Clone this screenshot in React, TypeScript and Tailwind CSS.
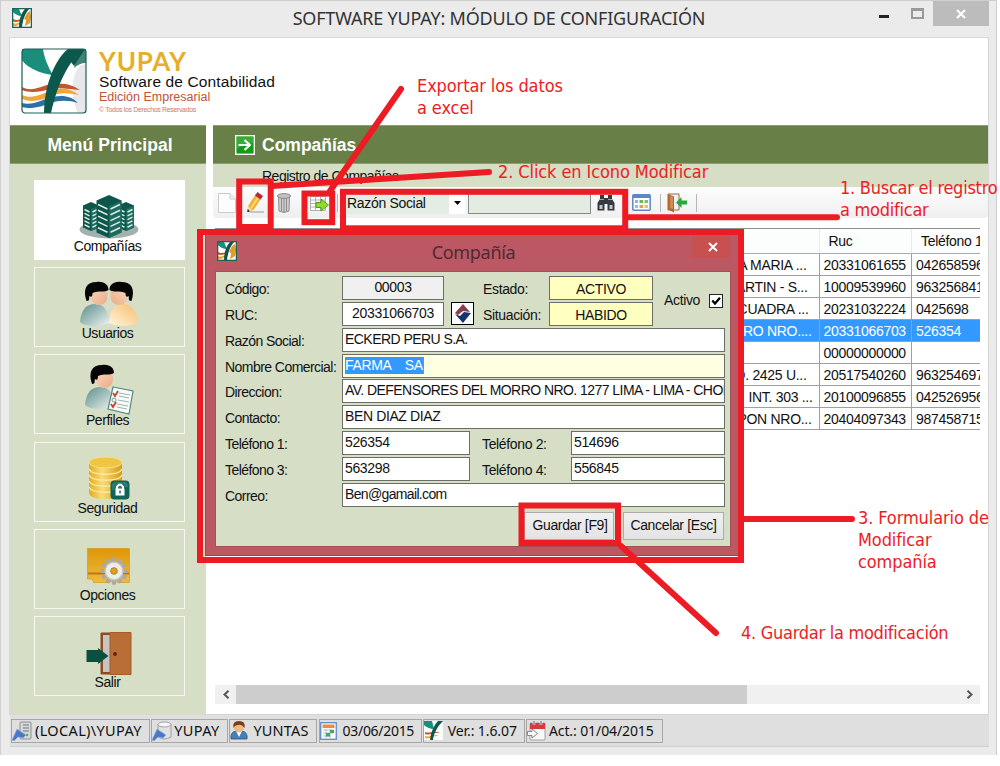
import React from "react";

const BrandMark = ({ className }: { className?: string }) => (
  <svg viewBox="0 0 66 66" className={className} preserveAspectRatio="none">
    <rect x="1" y="1" width="64" height="64" rx="3" fill="#fff" />
    <path d="M57 65C50 52 49 26 60 17L65 16V65Z" fill="#e8e8ea" />
    <path d="M1 1H22C23 9 27 19 32 27C20 26 5 19 1 12Z" fill="#1a8d7b" />
    <path d="M1 39C12 45 20 37 32 36S50 36 59 42C48 41 38 39 30 41S10 46 1 42Z" fill="#c2572f" />
    <path d="M1 47C12 52 22 45 32 42S50 41 58 47C48 45 38 44 30 48S10 55 1 51Z" fill="#efa63a" />
    <path d="M1 55C12 58 22 51 32 49S50 48 57 55C48 52 38 52 30 55S10 62 1 59Z" fill="#2b71a5" />
    <path d="M23 65C23 43 31 14 47 1H62C50 12 38 30 30 65Z" fill="#0d584c" />
    <path d="M53 20C54 13 57 6 62 1H65V15C60 15 56 17 53 20Z" fill="#3f8277" />
    <path d="M50 14L60 1H64L53 18Z" fill="#0d584c" />
    <rect x="1" y="1" width="64" height="64" rx="3" fill="none" stroke="#1c5f55" strokeWidth="1.2" />
  </svg>
);

const SmallMark = ({ className }: { className?: string }) => (
  <svg viewBox="0 0 20 20" className={className}>
    <rect x="0.6" y="0.6" width="18.8" height="18.8" fill="#fff" />
    <path d="M1 1H7L10 8C6 8 3 6 1 4Z" fill="#1a8d7b" />
    <path d="M1 11C5 13 8 11 11 11V12.500C8 12.500 5 15 1 13.500Z" fill="#c2572f" />
    <path d="M1 15C5 17 8 13 11 13.500V15C8 15 5 19 1 18Z" fill="#efa63a" />
    <path d="M15 5L18 3L19 9L18 15L15 17L13 18L14 12L12 11Z" fill="#e79a2c" />
    <path d="M7 19C7 12 9 5 13 1H17C13 6 11 11 10 19Z" fill="#0d584c" />
    <rect x="0.6" y="0.6" width="18.8" height="18.8" fill="none" stroke="#1c6358" strokeWidth="1.4" />
  </svg>
);

const Tower = ({ x, y, w, h, rows }: { x: number; y: number; w: number; h: number; rows: number }) => {
  const c = x + w / 2;
  const s = w * 0.22;
  return (
    <g>
      <path d={`M${x} ${y + s}L${c} ${y}L${x + w} ${y + s}V${y + h - s}L${c} ${y + h}L${x} ${y + h - s}Z`} fill="#0c564a" />
      <path d={`M${c} ${y + 2 * s}L${x + w} ${y + s}V${y + h - s}L${c} ${y + h}Z`} fill="#1d6b5f" />
      {Array.from({ length: rows }, (_, i) => {
        const yy = y + s + 4 + (i * (h - 2 * s - 3)) / rows;
        return (
          <path
            key={i}
            d={`M${x + 1.5} ${yy}L${c - 1.5} ${yy + s - 1}M${c + 1.5} ${yy + s - 1}L${x + w - 1.5} ${yy}`}
            stroke="#dcebe6"
            strokeWidth="1.5"
          />
        );
      })}
    </g>
  );
};

const CompaniesIcon = () => (
  <svg width="60" height="46" viewBox="0 0 60 46">
    <ellipse cx="30" cy="35.5" rx="29.5" ry="9" fill="#a3b1ae" />
    <Tower x={4} y={8} w={16} h={29} rows={5} />
    <Tower x={39} y={8} w={16} h={29} rows={5} />
    <Tower x={17.5} y={1} w={25} h={43} rows={5} />
  </svg>
);

const Defs = () => (
  <svg width="0" height="0" className="absolute">
    <defs>
      <linearGradient id="teal" x1="0" y1="0" x2="1" y2="1">
        <stop offset="0" stopColor="#5d8d8a" />
        <stop offset="0.55" stopColor="#a9c4c2" />
        <stop offset="1" stopColor="#eef4f3" />
      </linearGradient>
      <linearGradient id="peach" x1="0" y1="1" x2="1" y2="0">
        <stop offset="0" stopColor="#fff4df" />
        <stop offset="1" stopColor="#f7bf6b" />
      </linearGradient>
      <linearGradient id="skin" x1="0" y1="0" x2="1" y2="1">
        <stop offset="0" stopColor="#fbd9c0" />
        <stop offset="1" stopColor="#e9ab85" />
      </linearGradient>
      <linearGradient id="gold" x1="0" y1="0" x2="1" y2="0">
        <stop offset="0" stopColor="#e3ac1c" />
        <stop offset="0.4" stopColor="#f8dc78" />
        <stop offset="1" stopColor="#d99c12" />
      </linearGradient>
      <linearGradient id="folder" x1="0" y1="0" x2="0" y2="1">
        <stop offset="0" stopColor="#dd9608" />
        <stop offset="1" stopColor="#f0bb3c" />
      </linearGradient>
    </defs>
  </svg>
);

const Head = () => (
  <g>
    <path d="M6 13C6 8 10 6 16 6S24 9 24 15S20 24 15 24S7 20 6 13Z" fill="url(#skin)" />
    <path d="M3 20C-1 8 3 1 13 1C21 0 25 4 25 9C21 12 15 9 9 12C9 15 8 17 6 15C5 17 7 20 3 20Z" fill="#050505" />
  </g>
);

const UsersIcon = () => (
  <svg width="60" height="46" viewBox="0 0 60 46">
    <path d="M1 41C2 29 7 23 16 23S30 30 30 42C22 46 6 46 1 41Z" fill="url(#teal)" />
    <path d="M30 42C30 29 36 23 44 23S58 30 59 41C54 46 38 46 30 42Z" fill="url(#peach)" />
    <g transform="translate(4.5 0)"><Head /></g>
    <g transform="translate(55.5 0) scale(-1 1)"><Head /></g>
  </svg>
);

const ProfilesIcon = () => (
  <svg width="50" height="52" viewBox="0 0 50 52">
    <path d="M1 41C2 29 7 23 16 23S30 30 30 42C22 46 6 46 1 41Z" fill="url(#teal)" />
    <g transform="translate(5 0)"><Head /></g>
    <path d="M29 23L49 27L45 50L24 45Z" fill="#f8fbfa" stroke="#4f8a82" strokeWidth="1.2" />
    <path d="M35 29L46 31M35 32L45 34M34 36L45 38M33 40L44 42M33 43L43 45" stroke="#9bb5ad" strokeWidth="1" />
    <path d="M29 29L31 32L34 27M27 40L29 43L32 38" stroke="#c8422e" strokeWidth="1.8" fill="none" />
    <circle cx="30" cy="36" r="2" fill="none" stroke="#4f8a82" strokeWidth=".8" />
  </svg>
);

const SecurityIcon = () => (
  <svg width="42" height="45" viewBox="0 0 42 45">
    <path d="M1 6V37C1 45 34 45 34 37V6Z" fill="url(#gold)" />
    <ellipse cx="17.5" cy="6.5" rx="16.5" ry="5.5" fill="#efc643" stroke="#f8e08c" />
    <path d="M1 13C4 20 31 20 34 13M1 19C4 26 31 26 34 19M1 25C4 32 31 32 34 25M1 31C4 38 31 38 34 31" stroke="#fbe9a6" strokeWidth="1.3" fill="none" />
    <rect x="22.5" y="24.5" width="19" height="19" rx="4" fill="#0e6557" />
    <path d="M24 28Q25 26 28 26H38Q40 27 40 31L24 34Z" fill="#3a8a7d" opacity=".6" />
    <path d="M29 33V31Q32 26 35 31V33" stroke="#fff" strokeWidth="2" fill="none" />
    <rect x="27.5" y="32.5" width="9" height="7" fill="#fff" />
    <path d="M32 34.5V37.5" stroke="#0e6557" strokeWidth="1.4" />
  </svg>
);

const OptionsIcon = () => (
  <svg width="43" height="37" viewBox="0 0 43 37">
    <path d="M0.5 0.5H42.5V34.5H31L27 33L21 34.5H6.5L5 31H0.5Z" fill="url(#folder)" stroke="#d69a1d" strokeWidth=".7" />
    <path d="M1 25.5H42" stroke="#b87814" strokeWidth="2" />
    {Array.from({ length: 12 }, (_, i) => (
      <rect key={i} x="25" y="9.5" width="4" height="27" rx="1" fill="#aaa9a2" transform={`rotate(${i * 30} 27 23)`} />
    ))}
    <circle cx="27" cy="23" r="9.5" fill="#c9c9c3" />
    <circle cx="27" cy="23" r="8" fill="#eeeeea" />
    <circle cx="27" cy="23" r="3.3" fill="#dda02b" stroke="#b5811c" />
  </svg>
);

const ExitIcon = () => (
  <svg width="46" height="43" viewBox="0 0 46 43">
    <rect x="14.5" y="0.5" width="30" height="42" rx="1" fill="#8e4a22" />
    <rect x="17" y="3" width="9" height="37" fill="#c8c4c4" />
    <path d="M24 0.5H45V42.5H24Z" fill="#b86e35" stroke="#a55c28" />
    <circle cx="29" cy="22" r="1.9" fill="#5f2410" />
    <path d="M0.5 18H12V16L22.5 24L12 32V30H0.5Z" fill="#0b5143" />
  </svg>
);

const menu = [
  { label: "Compañías", icon: <CompaniesIcon />, active: true, lift: "mb-px" },
  { label: "Usuarios", icon: <UsersIcon />, lift: "mb-px" },
  { label: "Perfiles", icon: <ProfilesIcon />, lift: "-mb-px" },
  { label: "Seguridad", icon: <SecurityIcon />, lift: "mb-0.5" },
  { label: "Opciones", icon: <OptionsIcon />, lift: "mb-[5px]" },
  { label: "Salir", icon: <ExitIcon />, lift: "mb-0.5" },
];

const Sidebar = () => (
  <aside className="flex w-[196px] shrink-0 flex-col">
    <h2 className="flex h-[39px] items-center justify-center border-y border-[#8ba16f] bg-[#687f47] pl-1 pt-0.5 text-[17.500px] font-bold tracking-[0.05px] text-white">
      Menú Principal
    </h2>
    <nav className="flex grow flex-col gap-[7.4px] bg-[#d6dec6] pl-6 pt-[15.500px]">
      {menu.map((m) => (
        <button
          key={m.label}
          className={
            m.active
              ? "flex h-20 w-[151px] flex-col items-center justify-end border border-white bg-white pb-[5px]"
              : "flex h-20 w-[151px] flex-col items-center justify-end border border-[#f5f7f0] pb-[5px]"
          }
        >
          <span className={`block pr-0.5 ${m.lift}`}>
            <span className="-mb-[3px] block">{m.icon}</span>
          </span>
          <span className="pr-1 text-[14px] leading-4 tracking-[-0.45px]">{m.label}</span>
        </button>
      ))}
    </nav>
  </aside>
);

const Sep = ({ className }: { className?: string }) => <i className={`h-[18px] w-px shrink-0 bg-[#b5b5b5] ${className}`} />;

const Toolbar = () => (
  <div className="flex h-[31px] items-center rounded-b bg-gradient-to-b from-[#fdfdfd] to-[#efefef] pl-[5px]">
    <svg width="18" height="20" viewBox="0 0 18 20">
      <path d="M.5.5H12L17.5 6V19.5H.5Z" fill="#fdfdfd" stroke="#c8cbd0" />
      <path d="M12 .5V6H17.5" fill="#eee" stroke="#c8cbd0" />
    </svg>
    <svg width="20" height="22" viewBox="0 0 20 22" className="ml-[10px]">
      <path d="M4 20H18" stroke="#c5c5c5" strokeWidth="2" />
      <path d="M2 14L10 2L15.500 6L7.500 18L1.500 20Z" fill="#f3b130" />
      <path d="M5 16L13 4" stroke="#ffd876" strokeWidth="2" />
      <path d="M9 3.500L11.500 0L17 4L14.500 7.500Z" fill="#b52b3a" />
      <path d="M2 14L6.500 18L1.500 20Z" fill="#f4d9a8" />
      <path d="M1.700 17L4 19.300L1.300 20.300Z" fill="#222" />
    </svg>
    <svg width="14" height="20" viewBox="0 0 14 20" className="ml-[11px]">
      <path d="M1.500 4H12.500L12 18Q7 21 2 18Z" fill="#cfcfcf" stroke="#8e8e8e" />
      <path d="M4.500 5V18M7 5V19M9.500 5V18" stroke="#8a8a8a" />
      <ellipse cx="7" cy="3" rx="6.500" ry="2.400" fill="#c2c2c2" stroke="#898989" />
    </svg>
    <svg width="19" height="18" viewBox="0 0 19 18" className="ml-[19px] mt-0.5">
      <path d="M.5 1.500H15.500V15.500H.5ZM.5 5H15.500M.5 8.500H15.500M.5 12H15.500M5.500 1V16M10.500 1V16" fill="#fff" stroke="#aeb4b1" />
      <path d="M6 7.500H11V4L18.500 10L11 16V12.500H6Z" fill="#8edb2c" stroke="#56991e" />
    </svg>
    <Sep className="ml-2" />
    <div className="ml-1.5 flex h-[22px] w-[121px] items-center justify-between bg-[#e4ede4] pl-[3px]">
      <span className="pt-0.5 text-[14px] tracking-[-0.32px]">Razón Social</span>
      <span className="flex h-full w-4 items-center justify-center bg-white">
        <svg width="7" height="4" viewBox="0 0 7 4"><path d="M0 0H7L3.500 4Z" /></svg>
      </span>
    </div>
    <div className="ml-[3px] mt-px h-[22px] w-[123px] border border-[#858b86] bg-[#e4ece2]" />
    <svg width="18" height="17" viewBox="0 0 18 17" className="ml-1.5">
      <path d="M3 1H7V4H11V1H15V5L17.500 9V16.500H10.500V10H7.500V16.500H.5V9L3 5Z" fill="#353b43" />
      <path d="M2.500 11H5.500V15H2.500ZM12.500 11H15.500V15H12.500Z" fill="#c0c6cb" />
      <path d="M3 5.500H7M11 5.500H15" stroke="#9ea8b0" strokeWidth="1.200" />
    </svg>
    <svg width="19" height="17" viewBox="0 0 19 17" className="ml-[17px]">
      <rect x=".8" y=".8" width="17.400" height="15.400" rx="1" fill="#fff" stroke="#5d86c8" strokeWidth="1.500" />
      <rect x="1" y="1" width="17" height="3" fill="#5d86c8" />
      <path d="M3 6H6V9H3Z" fill="#80b7e8" /><path d="M7.500 6H11V9H7.500Z" fill="#6fb457" /><path d="M12.500 6H16V9H12.500Z" fill="#86be6b" />
      <path d="M3 11H6V14H3Z" fill="#8fc0ea" /><path d="M7.500 11H11V14H7.500Z" fill="#eb9d4f" /><path d="M12.500 11H16V14H12.500Z" fill="#ecc64b" />
    </svg>
    <Sep className="ml-[9px]" />
    <svg width="21" height="20" viewBox="0 0 21 20" className="ml-1.5">
      <path d="M1 1H12V17H1Z" fill="#edf2f5" stroke="#9a6a3e" />
      <path d="M1 1L7 3.500V19.500L1 16.500Z" fill="#b9662e" />
      <path d="M3 3L6 4V16L3 15Z" fill="#d38b4e" />
      <path d="M9 9.500L14.500 4V7.500H20V11.500H14.500V15Z" fill="#27a83d" />
    </svg>
    <Sep className="ml-2" />
  </div>
);

const rows = [
  ["A MARIA ...", "20331061655", "042658596", "pr-3"],
  ["ARTIN - S...", "10009539960", "963256841", "pr-[11px]"],
  ["CUADRA ...", "20231032224", "0425698", "pr-2.5"],
  ["RRO NRO....", "20331066703", "526354", "pr-[7px]"],
  ["", "00000000000", "", "pr-2"],
  ["O. 2425 U...", "20517540260", "963254697", "pr-3"],
  ["INT. 303 ...", "20100096855", "042526956", "pr-1.5"],
  ["RPON NRO...", "20404097343", "987458715", "pr-[7px]"],
];

const Grid = () => (
  <div className="ml-0.5 flex h-[203px] w-[765px] flex-col overflow-hidden border-t border-[#8f9190] text-[14px] tracking-[-0.3px]">
    <div className="flex h-[24.500px] shrink-0 items-center border-b border-[#a9adb0] bg-[#fcfdfd]">
      <span className="h-full w-[604.5px] shrink-0 border-r border-[#e1edf5]" />
      <span className="flex h-full w-[92.5px] shrink-0 items-center border-r border-[#e1edf5] pl-[9px] pt-px">Ruc</span>
      <span className="shrink-0 whitespace-nowrap pl-[9px] pt-px">Teléfono 1</span>
    </div>
    {rows.map((r, i) => (
      <div
        key={i}
        className={
          i === 3
            ? "flex h-[22.1px] shrink-0 border-b border-[#a0a0a0] bg-[#3399ff] leading-[23px] text-white"
            : "flex h-[22.1px] shrink-0 border-b border-[#a0a0a0] bg-white leading-[23px]"
        }
      >
        <span className={`w-[604.5px] shrink-0 whitespace-nowrap border-r border-[#a0a0a0] text-right ${r[3]}`}>{r[0]}</span>
        <span className="w-[92.5px] shrink-0 border-r border-[#a0a0a0] pl-1">{r[1]}</span>
        <span className="pl-1">{r[2]}</span>
      </div>
    ))}
  </div>
);

const Chevron = ({ right }: { right?: boolean }) => (
  <span className="flex h-full w-[21px] items-center justify-center bg-[#f0f0f0]">
    <svg width="8" height="9" viewBox="0 0 8 9">
      <path d={right ? "M1.500 .8L5.500 4.500L1.500 8.200" : "M6.500 .8L2.500 4.500L6.500 8.200"} fill="none" stroke="#555" strokeWidth="2" />
    </svg>
  </span>
);

const Main = () => (
  <main className="flex w-[775px] shrink-0 flex-col">
    <h1 className="flex h-[39px] items-center border-y border-[#8ba16f] bg-[#687f47] pl-[22px] text-[17.500px] font-bold text-white">
      <svg width="20" height="20" viewBox="0 0 20 20">
        <rect x=".7" y=".7" width="18.600" height="18.600" fill="#149a1b" stroke="#fff" strokeWidth="1.400" />
        <path d="M2 2H18V8Q9 8 2 14Z" fill="#4fb84b" opacity=".6" />
        <path d="M3.500 10H14M9.500 5L14.800 10L9.500 15" fill="none" stroke="#fff" strokeWidth="2.200" />
      </svg>
      <span className="pl-[7px] pt-0.5">Compañías</span>
    </h1>
    <p className="h-[23px] bg-[#d6dec6] pl-[49px] pt-[3px] text-[14px] leading-[18px] tracking-[-0.5px]">Registro de Compañías</p>
    <Toolbar />
    <div className="flex grow flex-col justify-between pb-2.5 pt-[10px]">
      <Grid />
      <div className="ml-0.5 flex h-[19px] w-[765px] bg-[#f0f0f0]">
        <Chevron />
        <span className="w-[511px] bg-[#cdcdcd]" />
        <span className="grow" />
        <Chevron right />
      </div>
    </div>
  </main>
);

const Field = ({ children, className }: { children?: React.ReactNode; className: string }) => (
  <div className={`h-6 shrink-0 overflow-hidden whitespace-nowrap border border-[#6b6e68] ${className}`}>{children}</div>
);

const Row = ({ label, children }: { label: string; children: React.ReactNode }) => (
  <div className="flex h-[25.850px] shrink-0">
    <label className="w-[117px] shrink-0 whitespace-nowrap pt-1 tracking-[-0.55px]">{label}</label>
    {children}
  </div>
);

const wide = "w-[383px] bg-white pl-0.5 leading-5";

const Dialog = () => (
  <section className="absolute left-[205px] top-[234px] flex h-[322px] w-[535px] flex-col border border-[#954751] bg-[#bb5863]">
    <header className="flex h-9 items-start pl-[11px]">
      <SmallMark className="mt-[6px] h-5 w-5" />
      <h3 className="w-[455px] pl-[18px] pt-[3px] text-center font-['Noto_Sans',sans-serif] text-[18px] leading-7 tracking-[-0.3px] text-[#4b2c33]">
        Compañía
      </h3>
      <button className="flex h-[23px] w-[38px] items-center justify-center bg-[#c75050] pl-[3px]">
        <svg width="10" height="10" viewBox="0 0 10 10"><path d="M1 1L9 9M9 1L1 9" stroke="#fff" strokeWidth="1.900" /></svg>
      </button>
    </header>
    <div className="ml-[9px] flex h-[276px] w-[516px] flex-col border border-[#a35159] bg-[#d6dec6] pl-[9px] pt-1 text-[14px] leading-[19px] tracking-[-0.35px]">
      <div className="flex">
        <div className="flex w-[257px] flex-col">
          <Row label="Código:"><Field className="w-[102px] bg-[#f0f0f0] text-center leading-5">00003</Field></Row>
          <Row label="RUC:">
            <Field className="w-[102px] bg-white text-center leading-5">20331066703</Field>
            <div className="ml-[7px] h-[23px] w-[23px] border border-black bg-white">
              <svg width="21" height="21" viewBox="0 0 21 21">
                <path d="M11 1L18 9L11 8L6 12L3 10Z" fill="#8d3c50" />
                <path d="M3 11L8 13L12 9L19 10L11 20Z" fill="#16356f" />
              </svg>
            </div>
          </Row>
        </div>
        <div className="flex w-[171px] flex-col">
          <div className="flex h-[25.850px]"><span className="w-[67px] pl-px pt-1">Estado:</span><Field className="w-[104px] bg-[#ffffc0] pt-px text-center leading-[23px]">ACTIVO</Field></div>
          <div className="flex h-[25.850px]"><span className="w-[67px] pl-px pt-1">Situación:</span><Field className="w-[104px] bg-[#ffffc0] pt-px text-center leading-[23px]">HABIDO</Field></div>
        </div>
        <div className="flex h-[49px] items-center pl-[11px]">
          <span className="w-[45px]">Activo</span>
          <span className="flex h-[14px] w-[14px] items-center justify-center border-[1.500px] border-[#222] bg-white">
            <svg width="10" height="10" viewBox="0 0 10 10"><path d="M1.300 4.500L4 7.500L9 1.800" stroke="#000" strokeWidth="2.300" fill="none" /></svg>
          </span>
        </div>
      </div>
      <Row label="Razón Social:"><Field className={`${wide} tracking-[-0.55px]`}>ECKERD PERU S.A.</Field></Row>
      <Row label="Nombre Comercial:">
        <Field className="w-[383px] bg-[#ffffe1] pl-0.5 pt-px tracking-[-0.35px]">
          <span className="inline-block h-[17px] whitespace-pre border-r border-[#d87a26] bg-[#3399ff] leading-[17px] text-white">{"FARMA    SA"}</span>
        </Field>
      </Row>
      <Row label="Direccion:"><Field className={`${wide} tracking-[-0.55px]`}>AV. DEFENSORES DEL MORRO NRO. 1277 LIMA - LIMA - CHORRILLOS</Field></Row>
      <Row label="Contacto:"><Field className={`${wide} tracking-[-0.38px]`}>BEN DIAZ DIAZ</Field></Row>
      <Row label="Teléfono 1:">
        <Field className="w-32 bg-white pl-0.5 leading-5">526354</Field>
        <span className="w-[101px] pl-3 pt-1">Teléfono 2:</span>
        <Field className="w-[154px] bg-white pl-0.5 leading-5">514696</Field>
      </Row>
      <Row label="Teléfono 3:">
        <Field className="w-32 bg-white pl-0.5 leading-5">563298</Field>
        <span className="w-[101px] pl-3 pt-1">Teléfono 4:</span>
        <Field className="w-[154px] bg-white pl-0.5 leading-5">556845</Field>
      </Row>
      <Row label="Correo:"><Field className={`${wide} tracking-[-0.65px]`}>Ben@gamail.com</Field></Row>
      <div className="flex justify-end gap-[9px] pr-[6px] pt-[3px]">
        <button className="h-7 w-[90px] border border-[#acacac] bg-gradient-to-b from-[#f0f0f0] to-[#e3e3e3] pl-0.5">Guardar [F9]</button>
        <button className="h-7 w-[101px] border border-[#acacac] bg-gradient-to-b from-[#f0f0f0] to-[#e3e3e3]">Cancelar [Esc]</button>
      </div>
    </div>
  </section>
);

const Plug = () => <path d="M0 19L5 8L14 14L11 17L6 16L2 20Z" fill="#4a78c4" stroke="#8fb2e6" strokeWidth=".7" />;

const ServerIcon = () => (
  <svg width="20" height="20" viewBox="0 0 20 20">
    <rect x="8" y="1" width="11" height="17" rx="1" fill="#d5d8da" stroke="#8d9093" />
    <path d="M11 4H17M11 7H17M11 10H17" stroke="#74797d" /><circle cx="15" cy="14" r="1.300" fill="#4eb84b" /><Plug />
  </svg>
);
const DbIcon = () => (
  <svg width="20" height="20" viewBox="0 0 20 20">
    <path d="M6 3V16Q12 20 19 16V3Z" fill="#dfe1e2" stroke="#9da0a2" /><ellipse cx="12.500" cy="3.500" rx="6.500" ry="2.500" fill="#f6f6f6" stroke="#a2a4a6" /><Plug />
  </svg>
);
const UserIcon = () => (
  <svg width="18" height="19" viewBox="0 0 18 19">
    <path d="M1 18Q0 11 6 10H12Q18 11 17 18Z" fill="#477fb9" stroke="#275787" strokeWidth=".8" />
    <path d="M6 10L9 16L12 10Z" fill="#fff" /><circle cx="9" cy="6.500" r="5" fill="#f0b887" />
    <path d="M3.500 7Q2 0 9 0T14.500 7Q12 3 8 4Q5 4 3.500 7Z" fill="#7a3e14" />
  </svg>
);
const DateIcon = () => (
  <svg width="17" height="18" viewBox="0 0 17 18">
    <rect x=".7" y=".7" width="15.600" height="16.600" fill="#fff" stroke="#6992c7" strokeWidth="1.400" />
    <path d="M2.500 2.500H14.500V6H2.500Z" fill="#f08a3c" />
    <path d="M3 8H14M3 11H14M3 14H11M6 7V16M10 7V16" stroke="#a9c5e4" />
    <path d="M10 8H14V11H10ZM6 11H10V14.500H6Z" fill="#4ba65a" />
  </svg>
);
const UpdateIcon = () => (
  <svg width="19" height="20" viewBox="0 0 19 20">
    <rect x="3" y="2" width="15" height="17" rx="1" fill="#f7f8f8" stroke="#a2a2a2" />
    <path d="M3 2H18V8H3Z" fill="#d8393c" /><path d="M7 0V4M14 0V4" stroke="#fff" strokeWidth="2.500" /><path d="M7 0V4M14 0V4" stroke="#8c2a2c" />
    <path d="M.5 10.500H5V8L10.500 12.500L5 17V14.500H.5Z" fill="#fafafa" stroke="#85898c" />
  </svg>
);

const VersionIcon = () => (
  <svg width="19" height="19" viewBox="0 0 19 19">
    <rect width="19" height="19" fill="#fdfdfd" />
    <path d="M0 0H8L10 8C6 8 2 6 0 4Z" fill="#1a8d7b" />
    <path d="M1 11C5 13 10 9 16 12C10 11 6 15 1 13Z" fill="#c2572f" />
    <path d="M1 15C5 17 10 12 15 15C10 14 6 19 1 17Z" fill="#efa63a" />
    <path d="M6 19C7 11 10 4 14 0H19C14 5 10 11 9 19Z" fill="#0d584c" />
  </svg>
);

const status = [
  { w: "w-[139px]", gap: "gap-[3px]", icon: <ServerIcon />, text: "(LOCAL)\\YUPAY", size: "text-[14.500px] tracking-[0.35px]" },
  { w: "w-[77px]", gap: "gap-0.5", icon: <DbIcon />, text: "YUPAY", size: "text-[14.500px] tracking-[0.4px]" },
  { w: "w-[88px]", gap: "gap-[5px]", icon: <UserIcon />, text: "YUNTAS", size: "text-[14.500px] tracking-[0.2px]" },
  { w: "w-[103px]", gap: "gap-1.5", icon: <DateIcon />, text: "03/06/2015", size: "text-[14px] tracking-[-0.3px]" },
  { w: "w-[102px]", gap: "gap-[5px]", icon: <VersionIcon />, text: "Ver.: 1.6.07", size: "text-[14px] tracking-[-0.1px]" },
  { w: "w-[137px]", gap: "gap-[3px]", icon: <UpdateIcon />, text: "Act.: 01/04/2015", size: "text-[14px] tracking-[-0.1px]" },
];

const StatusBar = () => (
  <footer className="flex h-8 items-center gap-[1.200px] border-b border-[#d0d0d0] bg-[#dfdfdf] pl-px font-['Noto_Sans',sans-serif]">
    {status.map((s) => (
      <div key={s.text} className={`flex h-6 shrink-0 items-center whitespace-nowrap border border-[#a6a6a6] ${s.w} ${s.gap}`}>
        {s.icon}
        <span className={s.size}>{s.text}</span>
      </div>
    ))}
  </footer>
);

const Annotations = () => (
  <div className="absolute inset-0 font-['DejaVu_Sans_Condensed','DejaVu_Sans',sans-serif] text-[18px] leading-[22px] tracking-[-0.1px] text-[#ed1c24]">
    <svg width="1000" height="766" viewBox="0 0 1000 766" className="absolute left-0 top-0" fill="none" stroke="#ed1c24" strokeWidth="6" strokeLinecap="round">
      <rect x="200" y="232" width="541" height="328" />
      <rect x="239.200" y="181.500" width="31.500" height="45.500" />
      <rect x="304.500" y="193.500" width="27.700" height="28.700" />
      <rect x="343" y="191.800" width="282.200" height="36.500" />
      <rect x="521.500" y="505.500" width="96.500" height="37.500" />
      <path d="M330 191L401 89M272 186L380 179L489 172M628 217.300H837M742 519H852M621 546L716 633" />
    </svg>
    <p className="absolute left-[417px] top-[75px] whitespace-nowrap">Exportar los datos<br />a excel</p>
    <p className="absolute left-[498px] top-[161px] whitespace-nowrap">2. Click en Icono Modificar</p>
    <p className="absolute left-[840px] top-[177px] whitespace-nowrap tracking-[-0.25px]">1. Buscar el registro<br />a modificar</p>
    <p className="absolute left-[858px] top-[507px] whitespace-nowrap">3. Formulario de<br />Modificar<br />compañía</p>
    <p className="absolute left-[741px] top-[622px] whitespace-nowrap tracking-[-0.27px]">4. Guardar la modificación</p>
  </div>
);

export default function App() {
  return (
    <div className="relative h-[766px] w-[1000px] overflow-hidden bg-white font-['Liberation_Sans',Arial,sans-serif] text-[#111]">
      <Defs />
      <div className="flex h-[755px] w-[997px] flex-col border-x border-t border-[#cfcfcf] bg-[#ebebeb]">
        <header className="flex h-[36px] shrink-0 items-start pl-[11px]">
          <SmallMark className="mt-[7px] h-5 w-5" />
          <h1 className="ml-[7px] w-[840px] shrink-0 pl-[80px] pt-[3px] text-center font-['Noto_Sans',sans-serif] text-[18px] leading-7 tracking-[-0.2px] text-[#333]">
            SOFTWARE YUPAY: MÓDULO DE CONFIGURACIÓN
          </h1>
          <i className="mt-[14px] h-[3px] w-2.5 shrink-0 bg-[#222]" />
          <i className="ml-[22px] mt-[7px] h-[11px] w-[13px] shrink-0 border-2 border-t-[3px] border-[#999]" />
          <div className="ml-[9px] flex h-[25px] w-[56px] shrink-0 items-center justify-center bg-[#bcbcbc]">
            <svg width="10" height="10" viewBox="0 0 10 10"><path d="M1 1L9 9M9 1L1 9" stroke="#fff" strokeWidth="2" /></svg>
          </div>
        </header>
        <div className="ml-2 flex h-[678px] w-[980px] shrink-0 flex-col border border-[#d7d7d7] bg-white">
          <div className="flex h-[87px] shrink-0 items-start pl-[11px] pt-[10px]">
            <BrandMark className="h-[66px] w-[66px]" />
            <div className="flex flex-col pl-3">
              <span className="-mt-px h-[26px] font-['Lato',sans-serif] text-[26px] font-bold leading-[28px] tracking-[0.8px] text-[#e5ae2c]">YUPAY</span>
              <span className="text-[15.500px] leading-[17px] tracking-[0.12px]">Software de Contabilidad</span>
              <span className="text-[12.500px] leading-[15px] text-[#bd5538]">Edición Empresarial</span>
              <span className="text-[7px] leading-[9px] tracking-[-0.35px] text-[#d07a62]">© Todos los Derechos Reservados</span>
            </div>
          </div>
          <div className="flex grow gap-[7px]">
            <Sidebar />
            <Main />
          </div>
        </div>
        <div className="ml-[9px] w-[979px]"><StatusBar /></div>
      </div>
      <Dialog />
      <Annotations />
    </div>
  );
}
